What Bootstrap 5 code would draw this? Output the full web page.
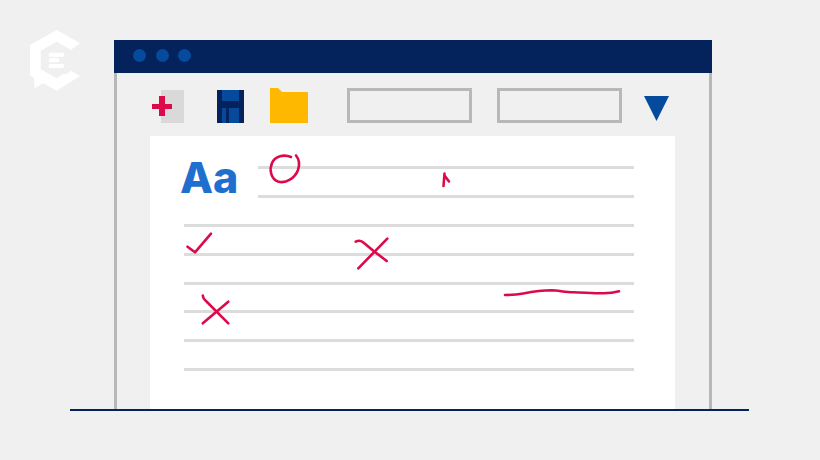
<!DOCTYPE html>
<html lang="en">
<head>
  <meta charset="UTF-8" />
  <meta name="viewport" content="width=device-width, initial-scale=1" />
  <title>Text editor illustration</title>
  <link href="https://cdn.jsdelivr.net/npm/bootstrap@5.3.3/dist/css/bootstrap.min.css" rel="stylesheet" />
  <style>
    body {
      background: #f0f0f0;
      overflow: hidden;
    }
    .stage {
      width: 820px;
      height: 460px;
      padding-top: 40px;
    }
    .brand-mark {
      top: 30px;
      left: 30px;
    }
    .app-window {
      width: 598px;
      height: 369px;
      margin-left: 114px;
      border-left: 3px solid #b8b8b8;
      border-right: 3px solid #b8b8b8;
    }
    .title-strip {
      height: 33px;
      margin: 0 -3px;
      padding: 0 0 2px 19px;
      gap: 9.5px;
      background: #04235c;
    }
    .title-dot {
      width: 13px;
      height: 13px;
      background: #054a9c;
    }
    .tool-strip {
      height: 63px;
      padding-top: 15px;
    }
    .tool-add { margin-left: 35px; }
    .tool-save { margin-left: 33px; }
    .tool-folder { margin-left: 26px; }
    .tool-field {
      width: 125px;
      height: 35px;
      background: transparent;
      border: 3px solid #b8b8b8;
    }
    .tool-field-a { margin-left: 39px; }
    .tool-field-b { margin-left: 25px; }
    .tool-arrow { margin-left: 22px; }
    .paper {
      width: 525px;
      margin-left: 33px;
      padding: 30px 41px 0 34px;
      background: #fff;
    }
    .type-sample {
      margin: -11px 0 0 -4px;
      height: 0;
      color: #1f6fcf;
      font: 800 43px/44px Inter, "Liberation Sans", sans-serif;
    }
    .rule-short {
      width: 376px;
    }
    .rule {
      height: 3px;
      background: #dcdcdc;
      margin-bottom: 25.88px;
    }
    .base-line {
      width: 679px;
      height: 2px;
      margin-left: 70px;
      background: #04235c;
    }
  </style>
</head>
<body>
  <div class="stage position-relative">
    <svg class="brand-mark position-absolute" width="52" height="62" viewBox="30 30 52 62">
      <path fill="#fff" d="M56.7 30 80 43.3 71 50 56.7 41.7 40.7 50.7V69.3L56.7 78.300 63.300 74 67 74 70.700 70.700 80 76 56.700 90.700 43.300 83.300 34.300 88.300V78.300L30 75V45Z" />
      <rect x="48.700" y="52.700" width="15.300" height="4" rx="1.500" fill="#fff" />
      <rect x="48.700" y="58.300" width="10.700" height="4" rx="1.500" fill="#fff" />
      <rect x="48.700" y="64" width="15.300" height="4" rx="1.500" fill="#fff" />
    </svg>

    <div class="app-window d-flex flex-column">
      <div class="title-strip d-flex align-items-center">
        <span class="title-dot rounded-circle"></span>
        <span class="title-dot rounded-circle"></span>
        <span class="title-dot rounded-circle"></span>
      </div>

      <div class="tool-strip d-flex align-items-start">
        <svg class="tool-add" width="32" height="35" viewBox="0 0 32 35">
          <rect x="9" y="2" width="23" height="33" fill="#d9d9d9" />
          <path fill="#dc0a4b" d="M7 8h6v8h7v5h-7v7H7v-7H0v-5h7z" />
        </svg>
        <svg class="tool-save" width="27" height="35" viewBox="0 0 27 35">
          <rect y="2" width="27" height="33" fill="#04235c" />
          <rect x="5" y="2" width="17" height="11" fill="#054a9c" />
          <rect x="5" y="20" width="4" height="15" fill="#054a9c" />
          <rect x="12" y="20" width="10" height="15" fill="#054a9c" />
        </svg>
        <svg class="tool-folder" width="38" height="35" viewBox="0 0 38 35">
          <path fill="#ffb800" d="M0 0H8L12 4H38V35H0Z" />
        </svg>
        <input class="tool-field tool-field-a form-control rounded-0" type="text" aria-label="Font" />
        <input class="tool-field tool-field-b form-control rounded-0" type="text" aria-label="Size" />
        <svg class="tool-arrow" width="25" height="35" viewBox="0 0 25 35">
          <path fill="#054a9c" d="M0 8H25L12.500 33Z" />
        </svg>
      </div>

      <div class="paper flex-grow-1 position-relative">
        <div class="d-flex justify-content-between">
          <div class="type-sample">Aa</div>
          <div class="rule-short">
            <div class="rule"></div>
            <div class="rule"></div>
          </div>
        </div>
        <div class="rule"></div>
        <div class="rule"></div>
        <div class="rule"></div>
        <div class="rule"></div>
        <div class="rule"></div>
        <div class="rule"></div>

        <!-- hand drawn marks, coordinates are the page's -->
        <svg class="position-absolute top-0 start-0 w-100 h-100" viewBox="150 136 525 273" fill="none" stroke="#dc0a4b" stroke-width="2.600" stroke-linecap="round" stroke-linejoin="round">
          <path d="M291 157C284 154 275 156 272 163 269 170 271 179 278 181.500 286 184 295 178 298 170 300 164 299 159 296 155.500" />
          <path d="M187.500 246.700 195 252.300 211 233.700" />
          <path d="M444.500 173.500 443.500 186M444.500 175.500 449 181.500" />
          <path d="M355.700 241.700C358 240.500 361 240 364 243L373.300 250.700 386.700 261M387.300 238.700 358.300 268.300" />
          <path d="M202.800 295.500C203 298 204 299.500 206 301L228.300 323.300M228.300 301.700 202.800 323.300" />
          <path d="M505 295C512 295 518 294.500 523.300 293.500 532 291.800 542 290.300 551.700 290.300 558 290.500 565 292 573.300 292.300 583 292.500 593 293.300 603.300 293.300 610 293.300 615 292.500 619 291.300" />
        </svg>
      </div>
    </div>

    <div class="base-line"></div>
  </div>

  <script src="https://cdn.jsdelivr.net/npm/bootstrap@5.3.3/dist/js/bootstrap.bundle.min.js"></script>
</body>
</html>
